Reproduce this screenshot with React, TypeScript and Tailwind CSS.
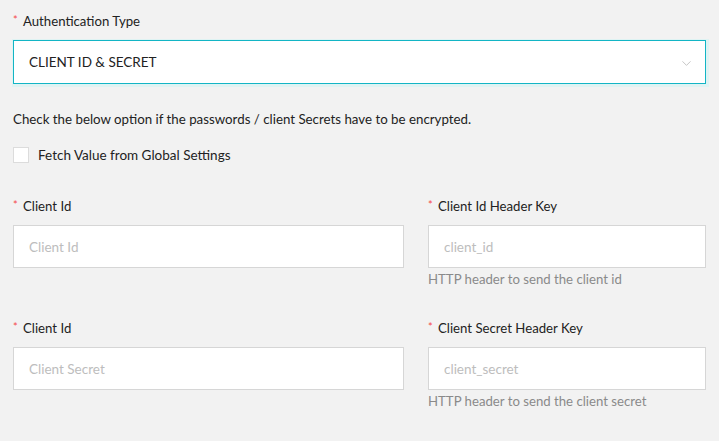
import { ChevronDown } from "lucide-react";

function Label({ text }: { text: string }) {
  return (
    <div className="flex items-start h-[20px] text-[13.2px] text-[#222]">
      <span className="text-[#f5494a] text-[11px] leading-[16px] w-[10px] pt-[1px]">*</span>
      <span className="leading-[20px]">{text}</span>
    </div>
  );
}

function Field({
  label,
  placeholder,
  help,
}: {
  label: string;
  placeholder: string;
  help?: string;
}) {
  return (
    <div className="flex flex-col">
      <Label text={label} />
      <input
        placeholder={placeholder}
        className="mt-[9px] h-[43px] w-full border border-[#d6d6d6] bg-white px-[15px] text-[13.5px] outline-none placeholder:text-[#bdbdbd]"
      />
      {help ? (
        <p className="mt-[2px] text-[13.2px] leading-[18px] text-[#8a8a8a]">{help}</p>
      ) : (
        <div className="h-[20px]" />
      )}
    </div>
  );
}

export default function App() {
  return (
    <div
      className="min-h-[441px] w-full bg-[#f2f2f2] px-[13px] pt-[11px]"
      style={{ fontFamily: "Lato, 'Open Sans', sans-serif" }}
    >
      {/* Auth type */}
      <Label text="Authentication Type" />
      <div className="mt-[9px] flex h-[44px] items-center justify-between border border-[#13b5c5] bg-white pl-[15px] pr-[11px] shadow-[1px_1px_0_2px_#dff3f3]">
        <span className="text-[13.5px] text-[#222]">CLIENT ID &amp; SECRET</span>
        <ChevronDown className="mt-[2px] h-[15px] w-[15px] text-[#b8b8b8]" strokeWidth={1.3} />
      </div>

      <p className="mt-[26px] text-[13.3px] leading-[18px] text-[#222]">
        Check the below option if the passwords / client Secrets have to be encrypted.
      </p>

      <label className="mt-[17px] flex items-center gap-[9px]">
        <span className="h-[16px] w-[16px] border border-[#dcdcdc] bg-white" />
        <span className="text-[13.5px] text-[#222]">Fetch Value from Global Settings</span>
      </label>

      <div className="mt-[31px] grid grid-cols-[391px_1fr] gap-x-[24px] gap-y-[30px]">
        <Field label="Client Id" placeholder="Client Id" />
        <Field
          label="Client Id Header Key"
          placeholder="client_id"
          help="HTTP header to send the client id"
        />
        <Field label="Client Id" placeholder="Client Secret" />
        <Field
          label="Client Secret Header Key"
          placeholder="client_secret"
          help="HTTP header to send the client secret"
        />
      </div>
    </div>
  );
}
